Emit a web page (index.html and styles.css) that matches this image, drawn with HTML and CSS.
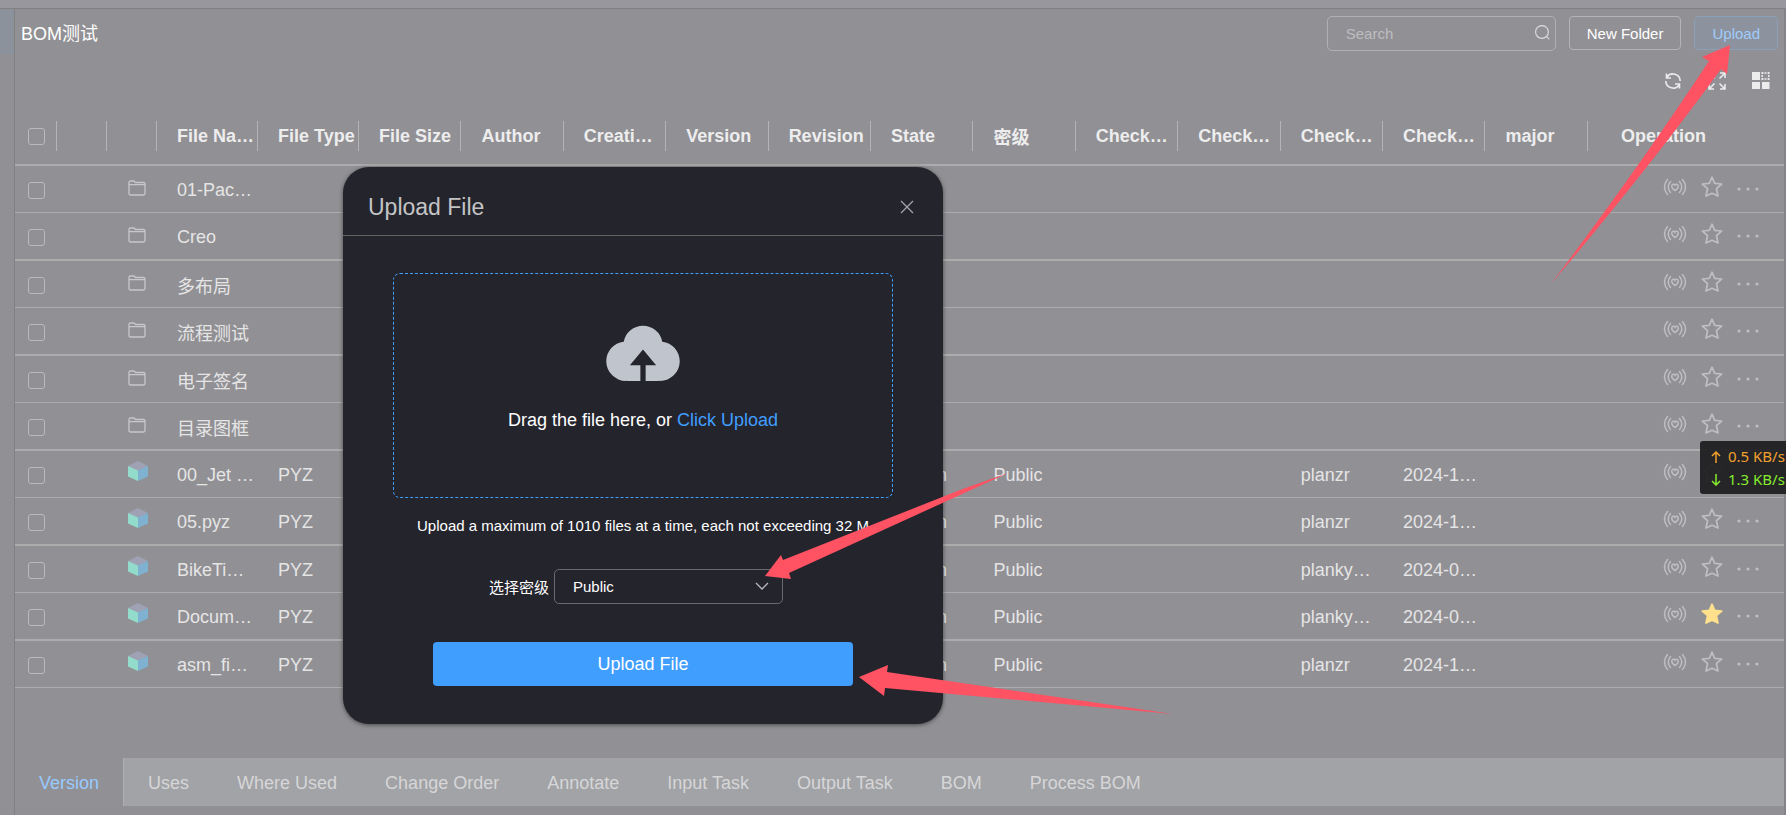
FILE: index.html
```html
<!DOCTYPE html>
<html lang="en">
<head>
<meta charset="utf-8">
<title>BOM测试</title>
<link rel="stylesheet" href="styles.css">
</head>
<body>
<svg class="sprite" aria-hidden="true">
  <symbol id="folder" viewBox="0 0 18 16"><path d="M1 13.500V2.500Q1 1 2.500 1H6L7.500 2.500H15.500Q17 2.500 17 4V13.500Q17 15 15.500 15H2.500Q1 15 1 13.500ZM1 4.700H17" fill="none" stroke="currentColor" stroke-width="1.300"/></symbol>
  <symbol id="cube" viewBox="0 0 20 20"><path d="M10 0 20 5 10 10 0 5Z" fill="#9fa1b5"/><path d="M0 5 10 9.500V20L0 15.500Z" fill="#93dccb"/><path d="M20 5 10 9.500V20L20 15.500Z" fill="#7fb1d0"/></symbol>
  <symbol id="signal" viewBox="0 0 24 18"><g fill="none" stroke="currentColor" stroke-width="1.500" stroke-linecap="round"><path d="M4.500 1.500Q-1.500 9 4.500 16.500M7.500 3.500Q3 9 7.500 14.500M19.500 1.500Q25.500 9 19.500 16.500M16.500 3.500Q21 9 16.500 14.500"/><path d="M12 12.500C10 11.300 8.700 10 8.700 8.200 8.700 6 11.200 5.600 12 7.200 12.800 5.600 15.300 6 15.300 8.200 15.300 10 14 11.300 12 12.500Z"/></g></symbol>
  <symbol id="star" viewBox="0 0 22 22"><path d="M11 1.200 13.700 7.400 20.700 8 15.400 12.600 17 20 11 17.200 5 20 6.600 12.600 1.300 8 8.300 7.400Z" stroke="currentColor" stroke-width="1.700" stroke-linejoin="round"/></symbol>
  <symbol id="dots" viewBox="0 0 22 4"><g fill="currentColor"><circle cx="2" cy="2" r="1.600"/><circle cx="11" cy="2" r="1.600"/><circle cx="20" cy="2" r="1.600"/></g></symbol>
</svg>

<div class="topbar"></div>
<div class="shell">
  <aside class="rail"><div class="rail-active"></div></aside>
  <main class="main">
    <header class="page-head">
      <h1 class="page-title">BOM测试</h1>
      <label class="search">
        <input class="search-input" type="text" placeholder="Search" aria-label="Search">
        <svg class="search-icon" viewBox="0 0 1024 1024"><path fill="currentColor" d="m795.904 750.72 124.992 124.928a32 32 0 0 1-45.248 45.248L750.656 795.904a416 416 0 1 1 45.248-45.248zM480 832a352 352 0 1 0 0-704 352 352 0 0 0 0 704z"/></svg>
      </label>
      <button class="btn" type="button">New Folder</button>
      <button class="btn btn-upload" type="button">Upload</button>
    </header>
    <div class="tools">
      <button class="tool" type="button" aria-label="Refresh"><svg viewBox="0 0 18 18" width="18" height="18" fill="none" stroke="currentColor" stroke-width="1.600"><path d="M2.500 1.500V6H7M2.700 5.700A7.200 7.200 0 0 1 16.200 9M15.500 16.500V12H11M15.300 12.300A7.200 7.200 0 0 1 1.800 9"/></svg></button>
      <button class="tool" type="button" aria-label="Full screen"><svg viewBox="0 0 18 18" width="18" height="18" fill="none" stroke="currentColor" stroke-width="1.600"><path d="M1 6V1H6M1 1 6.500 6.500M12 1H17V6M17 1 11.500 6.500M1 12V17H6M1 17 6.500 11.500M17 12V17H12M17 17 11.500 11.500"/></svg></button>
      <button class="tool" type="button" aria-label="Columns"><svg viewBox="0 0 18 18" width="18" height="18"><path fill="currentColor" d="M0 0H8V8H0ZM0 10H8V17H0ZM10 10H17.500V17H10Z"/><path d="M9.500 1H17.500M9.500 7H17.500M10.200 0V8M16.800 0V8" fill="none" stroke="currentColor" stroke-width="1.500" stroke-dasharray="2 1"/></svg></button>
    </div>
    <table class="grid">
      <colgroup><col class="c-check"><col class="c-icon"><col class="c-icon"><col class="c-name"><col class="c-name"><col><col><col><col><col><col><col><col><col><col><col><col><col class="c-op"></colgroup>
      <thead><tr>
        <th><input class="check" type="checkbox" aria-label="Select all"></th><th></th><th></th><th>File Na…</th><th>File Type</th><th>File Size</th><th>Author</th><th>Creati…</th><th>Version</th><th>Revision</th><th>State</th><th>密级</th><th>Check…</th><th>Check…</th><th>Check…</th><th>Check…</th><th>major</th><th class="op-head">Operation</th>
      </tr></thead>
      <tbody>
        <tr><td><input class="check" type="checkbox" aria-label="Select row"></td><td></td><td><svg class="folder"><use href="#folder"/></svg></td><td>01-Pac…</td><td></td><td></td><td></td><td></td><td></td><td></td><td></td><td></td><td></td><td></td><td></td><td></td><td></td><td><div class="ops"><svg class="signal"><use href="#signal"/></svg><svg class="star"><use href="#star"/></svg><svg class="dots"><use href="#dots"/></svg></div></td></tr>
        <tr><td><input class="check" type="checkbox" aria-label="Select row"></td><td></td><td><svg class="folder"><use href="#folder"/></svg></td><td>Creo</td><td></td><td></td><td></td><td></td><td></td><td></td><td></td><td></td><td></td><td></td><td></td><td></td><td></td><td><div class="ops"><svg class="signal"><use href="#signal"/></svg><svg class="star"><use href="#star"/></svg><svg class="dots"><use href="#dots"/></svg></div></td></tr>
        <tr><td><input class="check" type="checkbox" aria-label="Select row"></td><td></td><td><svg class="folder"><use href="#folder"/></svg></td><td>多布局</td><td></td><td></td><td></td><td></td><td></td><td></td><td></td><td></td><td></td><td></td><td></td><td></td><td></td><td><div class="ops"><svg class="signal"><use href="#signal"/></svg><svg class="star"><use href="#star"/></svg><svg class="dots"><use href="#dots"/></svg></div></td></tr>
        <tr><td><input class="check" type="checkbox" aria-label="Select row"></td><td></td><td><svg class="folder"><use href="#folder"/></svg></td><td>流程测试</td><td></td><td></td><td></td><td></td><td></td><td></td><td></td><td></td><td></td><td></td><td></td><td></td><td></td><td><div class="ops"><svg class="signal"><use href="#signal"/></svg><svg class="star"><use href="#star"/></svg><svg class="dots"><use href="#dots"/></svg></div></td></tr>
        <tr><td><input class="check" type="checkbox" aria-label="Select row"></td><td></td><td><svg class="folder"><use href="#folder"/></svg></td><td>电子签名</td><td></td><td></td><td></td><td></td><td></td><td></td><td></td><td></td><td></td><td></td><td></td><td></td><td></td><td><div class="ops"><svg class="signal"><use href="#signal"/></svg><svg class="star"><use href="#star"/></svg><svg class="dots"><use href="#dots"/></svg></div></td></tr>
        <tr><td><input class="check" type="checkbox" aria-label="Select row"></td><td></td><td><svg class="folder"><use href="#folder"/></svg></td><td>目录图框</td><td></td><td></td><td></td><td></td><td></td><td></td><td></td><td></td><td></td><td></td><td></td><td></td><td></td><td><div class="ops"><svg class="signal"><use href="#signal"/></svg><svg class="star"><use href="#star"/></svg><svg class="dots"><use href="#dots"/></svg></div></td></tr>
        <tr><td><input class="check" type="checkbox" aria-label="Select row"></td><td></td><td><svg class="cube"><use href="#cube"/></svg></td><td>00_Jet …</td><td>PYZ</td><td></td><td></td><td></td><td></td><td></td><td>Design</td><td>Public</td><td></td><td></td><td>planzr</td><td>2024-1…</td><td></td><td><div class="ops"><svg class="signal"><use href="#signal"/></svg><svg class="star"><use href="#star"/></svg><svg class="dots"><use href="#dots"/></svg></div></td></tr>
        <tr><td><input class="check" type="checkbox" aria-label="Select row"></td><td></td><td><svg class="cube"><use href="#cube"/></svg></td><td>05.pyz</td><td>PYZ</td><td></td><td></td><td></td><td></td><td></td><td>Design</td><td>Public</td><td></td><td></td><td>planzr</td><td>2024-1…</td><td></td><td><div class="ops"><svg class="signal"><use href="#signal"/></svg><svg class="star"><use href="#star"/></svg><svg class="dots"><use href="#dots"/></svg></div></td></tr>
        <tr><td><input class="check" type="checkbox" aria-label="Select row"></td><td></td><td><svg class="cube"><use href="#cube"/></svg></td><td>BikeTi…</td><td>PYZ</td><td></td><td></td><td></td><td></td><td></td><td>Design</td><td>Public</td><td></td><td></td><td>planky…</td><td>2024-0…</td><td></td><td><div class="ops"><svg class="signal"><use href="#signal"/></svg><svg class="star"><use href="#star"/></svg><svg class="dots"><use href="#dots"/></svg></div></td></tr>
        <tr><td><input class="check" type="checkbox" aria-label="Select row"></td><td></td><td><svg class="cube"><use href="#cube"/></svg></td><td>Docum…</td><td>PYZ</td><td></td><td></td><td></td><td></td><td></td><td>Design</td><td>Public</td><td></td><td></td><td>planky…</td><td>2024-0…</td><td></td><td><div class="ops"><svg class="signal"><use href="#signal"/></svg><svg class="star star-on"><use href="#star"/></svg><svg class="dots"><use href="#dots"/></svg></div></td></tr>
        <tr><td><input class="check" type="checkbox" aria-label="Select row"></td><td></td><td><svg class="cube"><use href="#cube"/></svg></td><td>asm_fi…</td><td>PYZ</td><td></td><td></td><td></td><td></td><td></td><td>Design</td><td>Public</td><td></td><td></td><td>planzr</td><td>2024-1…</td><td></td><td><div class="ops"><svg class="signal"><use href="#signal"/></svg><svg class="star"><use href="#star"/></svg><svg class="dots"><use href="#dots"/></svg></div></td></tr>
      </tbody>
    </table>
    <nav class="tabs">
      <button class="tab tab-active" type="button">Version</button>
      <button class="tab" type="button">Uses</button>
      <button class="tab" type="button">Where Used</button>
      <button class="tab" type="button">Change Order</button>
      <button class="tab" type="button">Annotate</button>
      <button class="tab" type="button">Input Task</button>
      <button class="tab" type="button">Output Task</button>
      <button class="tab" type="button">BOM</button>
      <button class="tab" type="button">Process BOM</button>
    </nav>
  </main>
</div>

<section class="dialog" role="dialog" aria-labelledby="dialog-title">
  <header class="dialog-head">
    <h2 class="dialog-title" id="dialog-title">Upload File</h2>
    <button class="close" type="button" aria-label="Close"><svg viewBox="0 0 14 14" width="14" height="14"><path d="M1 1 13 13M13 1 1 13" stroke="currentColor" stroke-width="1.200"/></svg></button>
  </header>
  <div class="dialog-body">
    <div class="drop">
      <svg class="cloud" viewBox="0 0 1024 1024"><path fill="currentColor" d="M544 864V672h128L512 480 352 672h128v192H320v-1.600c-5.376.320-10.496 1.600-16 1.600A240 240 0 0 1 64 624c0-123.136 93.120-223.488 212.608-237.248A239.808 239.808 0 0 1 512 192a239.872 239.872 0 0 1 235.456 194.752c119.488 13.760 212.480 114.112 212.480 237.248a240 240 0 0 1-240 240c-5.376 0-10.560-1.280-16-1.600v1.600H544z"/></svg>
      <p class="drop-text">Drag the file here, or <a class="drop-link" href="#">Click Upload</a></p>
    </div>
    <p class="hint">Upload a maximum of 1010 files at a time, each not exceeding 32 M</p>
    <div class="field">
      <label for="level">选择密级</label>
      <div class="select-box">
        <select class="select" id="level"><option>Public</option></select>
        <svg class="chevron" viewBox="0 0 14 8"><path d="M1 1 7 7 13 1" fill="none" stroke="currentColor" stroke-width="1.300"/></svg>
      </div>
    </div>
    <button class="submit" type="button">Upload File</button>
  </div>
</section>

<div class="speed">
  <div class="speed-row speed-up"><svg viewBox="0 0 10 12" width="10" height="12"><path d="M5 12V1M1 5 5 1 9 5" fill="none" stroke="currentColor" stroke-width="1.500"/></svg><span>0.5 KB/s</span></div>
  <div class="speed-row speed-down"><svg viewBox="0 0 10 12" width="10" height="12"><path d="M5 0V11M1 7 5 11 9 7" fill="none" stroke="currentColor" stroke-width="1.500"/></svg><span>1.3 KB/s</span></div>
</div>

<svg class="arrows" aria-hidden="true">
  <path d="M1730 45 1702 57 1709 61Q1640 166 1551 284 1650 167 1721 69L1727 74Z"/>
  <path d="M765 576 781 555 783 560 960 490 1008 473 960 495 789 573 791 579Z"/>
  <path d="M859 677 888 665 887 672 1173 714 885 688 884 696Z"/>
</svg>
</body>
</html>
```
FILE: styles.css
```css
* { box-sizing: border-box; }
html, body { height: 100%; }
body {
  margin: 0;
  display: flex;
  flex-direction: column;
  overflow: hidden;
  background: #919094;
  color: #e5e5e6;
  font-family: "Liberation Sans", Arial, "Noto Sans CJK SC", sans-serif;
  font-size: 18px;
}
button, input, select { font-family: inherit; margin: 0; }
h1, h2, p { margin: 0; font-weight: 400; }
.sprite { position: absolute; width: 0; height: 0; }

.topbar { height: 9px; flex: none; background: #98979d; border-bottom: 1px solid #808080; }
.shell { flex: 1; min-height: 0; display: flex; }
.rail { width: 15px; flex: none; border-right: 1px solid #808080; }
.rail-active { height: 45px; background: #8b929c; }
.main { flex: 1; min-width: 0; display: flex; flex-direction: column; border-right: 2px solid #858488; }

.page-head { display: flex; align-items: flex-start; gap: 13px; padding: 7px 6px 0 6px; height: 58px; }
.page-title { flex: 1; font-size: 18px; line-height: 37px; color: #fff; }
.search { position: relative; width: 229px; }
.search-input {
  width: 100%; height: 35px; padding: 0 40px 0 18px;
  border: 1px solid #b0b0b1; border-radius: 5px;
  background: none; color: #fff; font-size: 15px;
}
.search-input::placeholder { color: #bdbdc0; opacity: 1; }
.search-icon { position: absolute; right: 5px; top: 8px; width: 17px; height: 17px; color: #dedee0; }
.btn {
  height: 34px; padding: 0 17px; border: 1px solid #b4b4b5; border-radius: 4px;
  background: none; color: #fff; font-size: 15px;
}
.btn-upload { background: #8d939e; border-color: #8a9fb8; color: #9fcbfb; }

.tools { display: flex; justify-content: flex-end; gap: 26px; height: 39px; padding: 5px 14px 0 0; }
.tool { width: 18px; height: 18px; padding: 0; border: 0; background: none; color: #ececed; }
.tool svg { display: block; }

.grid { width: 100%; table-layout: fixed; border-collapse: separate; border-spacing: 0; }
.c-check { width: 42px; }
.c-icon { width: 50px; }
.c-name { width: 101px; }
.c-op { width: 196px; }
.grid th, .grid td { padding: 2px 0 0 20px; text-align: left; white-space: nowrap; overflow: hidden; }
.grid th {
  height: 60px; border-bottom: 2px solid #acacac; color: #ededee; font-weight: 700;
  background: linear-gradient(#b4b4b5, #b4b4b5) right 15px / 1px 30px no-repeat;
}
.grid th:last-child { background: none; }
.grid th:first-child, .grid td:first-child { padding-left: 13px; }
.grid td:nth-child(3) { padding-left: 21px; }
.grid th.op-head { padding-left: 33px; }
.grid td { height: 47px; border-bottom: 1px solid #acacac; }
.grid tbody tr:nth-child(even) td { height: 48px; border-bottom-width: 2px; }
.check {
  appearance: none; display: block; width: 17px; height: 17px;
  border: 1px solid #bababb; border-radius: 3px; background: none;
}
.folder { display: block; width: 18px; height: 16px; margin-bottom: 4px; color: #c8c8ca; }
.cube { display: block; width: 20px; height: 20px; margin-bottom: 8px; }
.ops { display: flex; align-items: center; gap: 14px; padding: 0 0 6px 55px; color: #bfbfc1; }
.signal { width: 24px; height: 18px; }
.star { width: 22px; height: 22px; fill: none; }
.star-on { color: #ffe08c; fill: currentColor; }
.dots { width: 22px; height: 4px; margin-top: 3px; }

.tabs { display: flex; margin: auto 0 9px; background: #a2a3a6; height: 48px; }
.tab { padding: 2px 24px 0; border: 0; background: none; color: #d6d6d8; font-size: 18px; }
.tab-active { background: #919094; border-right: 1px solid #b0b0b2; color: #99caff; }

.dialog {
  position: absolute; left: 343px; top: 167px; width: 600px;
  border-radius: 26px; background: #24242d; color: #fff;
  box-shadow: 0 1px 4px rgba(0, 0, 0, 0.5);
}
.dialog-head {
  display: flex; align-items: center; justify-content: space-between;
  height: 69px; padding: 12px 29px 0 25px; border-bottom: 1px solid #626262;
}
.dialog-title { font-size: 23px; color: #c4c4c5; }
.close { padding: 0; border: 0; background: none; color: #a6a7ac; display: flex; }
.dialog-body { display: flex; flex-direction: column; align-items: center; padding: 37px 50px 38px; }
.drop {
  width: 100%; height: 225px; padding-top: 36px;
  display: flex; flex-direction: column; align-items: center;
  border: 1px dashed #409eff; border-radius: 7px;
}
.cloud { width: 84px; height: 84px; color: #c0c4cc; }
.drop-text { margin-top: 16px; line-height: 20px; font-size: 18px; }
.drop-link { color: #409eff; text-decoration: none; }
.hint { margin-top: 18px; font-size: 15px; line-height: 20px; }
.field { display: flex; align-items: center; gap: 5px; margin: 33px 14px 0 0; font-size: 15px; }
.select-box { position: relative; width: 229px; }
.select {
  appearance: none; display: block; width: 100%; height: 35px; padding: 0 18px;
  border: 1px solid #6a6a6c; border-radius: 5px; background: none; color: #fff; font-size: 15px;
}
.chevron { position: absolute; right: 14px; top: 13px; width: 14px; height: 8px; color: #b5b8c0; }
.submit {
  width: 420px; height: 44px; margin-top: 38px; border: 0; border-radius: 4px;
  background: #409eff; color: #fff; font-size: 18px;
}

.speed {
  position: absolute; right: 0; top: 441px; width: 86px; height: 53px; padding: 4px 0 0 11px;
  border-radius: 3px 0 0 3px; background: rgba(32, 32, 34, 0.95); overflow: hidden;
  font-family: "Noto Sans", sans-serif; font-size: 15px; line-height: 23px;
}
.speed-row { display: flex; align-items: center; gap: 7px; white-space: nowrap; }
.speed-up { color: #f2a02c; }
.speed-down { color: #86ec2c; }

.arrows { position: absolute; left: 0; top: 0; width: 100%; height: 100%; pointer-events: none; fill: #ff5263; }
```
